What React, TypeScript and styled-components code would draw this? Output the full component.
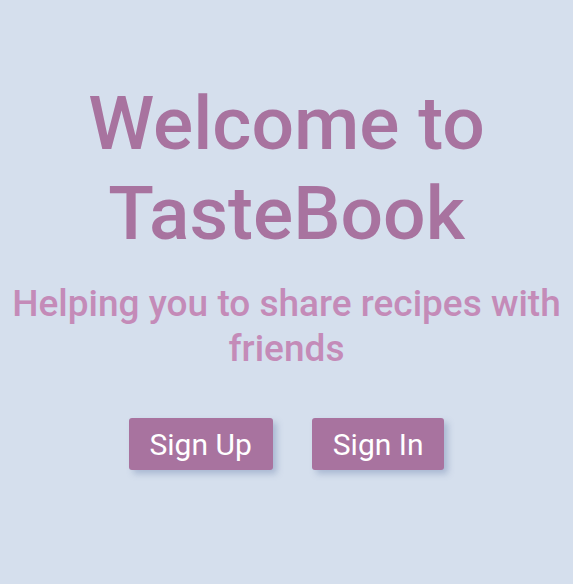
import React from 'react'
import styled, { createGlobalStyle } from 'styled-components'

const GlobalStyle = createGlobalStyle`
  html, body {
    margin: 0;
    padding: 0;
    background: #d5dfed;
    font-family: Roboto, "Liberation Sans", sans-serif;
  }
`

const Page = styled.main`
  min-height: 584px;
  display: flex;
  flex-direction: column;
  align-items: center;
  padding-top: 78px;
  box-sizing: border-box;
  text-align: center;
`

const Title = styled.h1`
  margin: 0;
  font-size: 75px;
  font-weight: 500;
  line-height: 90px;
  color: #a8739f;
`

const Tagline = styled.h2`
  margin: 23px 0 0;
  font-size: 37px;
  font-weight: 500;
  line-height: 45px;
  color: #c48bb8;
`

const Actions = styled.div`
  display: flex;
  gap: 39px;
  margin-top: 47px;
`

const Button = styled.button`
  height: 52px;
  padding: 0 21px;
  border: none;
  border-radius: 3px;
  background: #a8739f;
  color: #fff;
  font-family: inherit;
  font-size: 30px;
  font-weight: 400;
  box-shadow: 4px 4px 6px rgba(120, 140, 180, 0.45);
  cursor: pointer;
`

export default function App() {
  return (
    <>
      <GlobalStyle />
      <Page>
        <Title>
          Welcome to
          <br />
          TasteBook
        </Title>
        <Tagline>
          Helping you to share recipes with
          <br />
          friends
        </Tagline>
        <Actions>
          <Button>Sign Up</Button>
          <Button>Sign In</Button>
        </Actions>
      </Page>
    </>
  )
}
